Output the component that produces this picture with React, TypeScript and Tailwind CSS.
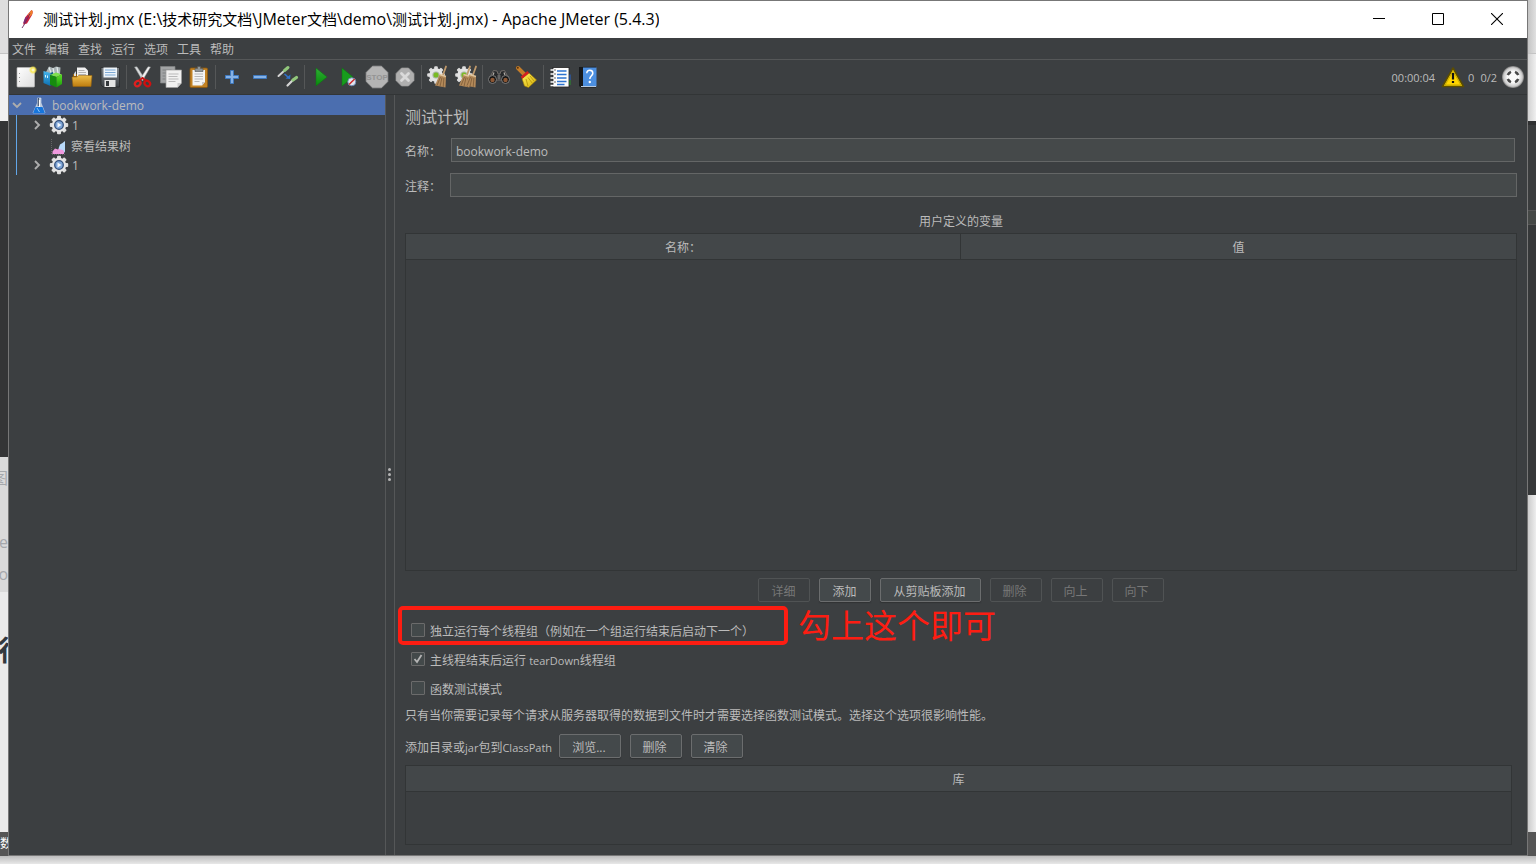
import type { ReactNode } from "react";

const UI_FONT = "font-['Open_Sans','Noto_Sans_CJK_SC',sans-serif]";

function Icon({ children, defs }: { children: ReactNode; defs?: ReactNode }) {
  return (
    <svg viewBox="0 0 24 24" className="size-6" aria-hidden="true">
      {defs && <defs>{defs}</defs>}
      {children}
    </svg>
  );
}

function Gradient({ id, from, to, diagonal }: { id: string; from: string; to: string; diagonal?: boolean }) {
  return (
    <linearGradient id={id} x1="0" y1="0" x2={diagonal ? "1" : "0"} y2="1">
      <stop offset="0" stopColor={from} />
      <stop offset="1" stopColor={to} />
    </linearGradient>
  );
}

const GEAR_TEETH = [0, 45, 90, 135, 180, 225, 270, 315];

function SmallBroom({ x = 0 }: { x?: number }) {
  return (
    <g transform={`translate(${x} 0)`}>
      <path d="M20 1.500 16.800 10.500" stroke="#c09a6c" strokeWidth="1.800" strokeLinecap="round" />
      <path d="M13.500 9.500 20 11.500 19.500 22.500 9 20.500Z" fill="#b48a5a" />
      <path d="M14.500 12 11 20.500M16 12.500 14 21.500M17.900 13 17.200 22" stroke="#7c5a36" strokeWidth="0.800" />
      <path d="M13.500 9.500 20 11.500" stroke="#e0c49c" strokeWidth="1.400" />
    </g>
  );
}

function SilverGear({ cx, cy }: { cx: number; cy: number }) {
  return (
    <g>
      {GEAR_TEETH.map((a) => (
        <rect key={a} x={cx - 1.8} y={cy - 8.8} width="3.600" height="5" rx="1" fill="#dcdcdc" transform={`rotate(${a} ${cx} ${cy})`} />
      ))}
      <circle cx={cx} cy={cy} r="6.800" fill="#e4e4e4" />
      <circle cx={cx} cy={cy} r="3.600" fill="#a9b7a0" />
      <circle cx={cx} cy={cy} r="2.500" fill="#79bb22" />
    </g>
  );
}

const icons: Record<string, ReactNode> = {
  new: (
    <Icon defs={<><Gradient id="pg" from="#ffffff" to="#dddddd" diagonal /><radialGradient id="glow"><stop offset="0" stopColor="#fff" /><stop offset="0.500" stopColor="#f8e858" /><stop offset="1" stopColor="#ffe933" stopOpacity="0" /></radialGradient></>}>
      <rect x="3" y="2.500" width="17.500" height="19.500" rx="0.800" fill="url(#pg)" stroke="#b9b9b9" strokeWidth="0.700" />
      <path d="M5.500 8v1M5.500 12v1M5.500 16v1" stroke="#999" />
      <circle cx="19" cy="5" r="4.200" fill="url(#glow)" />
    </Icon>
  ),
  templates: (
    <Icon defs={<><Gradient id="tb" from="#48b7ee" to="#0c6fb0" /><Gradient id="tg" from="#5ede28" to="#159a08" /></>}>
      <path d="M4 7 7 1.500 11 3 14 1.500 18.500 2.500 18 9 8 10Z" fill="#aab4b6" />
      <path d="m7 2.500 2 5M11 3l1 5M15 2l1 6" stroke="#e6eded" strokeWidth="1.200" />
      <path d="m1.500 6 7 2v13l-7-3Z" fill="url(#tb)" />
      <path d="m8.500 8 2.500-1v12l-2.500 2Z" fill="#0b5d8a" />
      <path d="M3.500 10v2.500M5.500 10.500V13" stroke="#d8f4ff" />
      <path d="m8 10 6-2.500 6 2-5.500 2.500Z" fill="#7fe04e" />
      <path d="m8 10 6.500 2v10.500L8 19.500Z" fill="#168c0e" />
      <path d="m14.500 12 5.500-2.500V19l-5.500 3.500Z" fill="url(#tg)" />
    </Icon>
  ),
  open: (
    <Icon defs={<Gradient id="fo" from="#edbd48" to="#bd7c0f" />}>
      <path d="M3 9h5l1 2h11v9H3Z" fill="#98630b" />
      <path d="M7 2.500h8l3 3v8H7Z" fill="#f1f1f1" />
      <path d="M8.500 5.500h6M8.500 7.500h7.500M8.500 9.500h7.500" stroke="#aaa" strokeWidth="0.900" />
      <path d="M4 8.500 6 6v5H4Z" fill="#ddd" />
      <path d="M2 12h5l1.500-1.500H22l-1 11H3Z" fill="url(#fo)" stroke="#9a670f" strokeWidth="0.600" />
    </Icon>
  ),
  save: (
    <Icon defs={<Gradient id="sv" from="#80858a" to="#3c4044" />}>
      <path d="M3 2.500h18.500v19.500H5L3 20Z" fill="url(#sv)" stroke="#292b2c" strokeWidth="0.800" />
      <rect x="5.500" y="2.500" width="13.500" height="10" fill="#edf4fa" />
      <path d="M7 5h10.500M7 7.500h10.500M7 10h10.500" stroke="#7ca8d4" strokeWidth="1.100" />
      <rect x="6.500" y="15" width="11" height="7" fill="#e4e4e4" />
      <rect x="8" y="16" width="3" height="5" fill="#34383b" />
    </Icon>
  ),
  cut: (
    <Icon>
      <path d="M3.500 2 6 1.800 14 14l-2.500 1.500Z" fill="#d8dbdc" stroke="#8c9091" strokeWidth="0.500" />
      <path d="M19.500 2 17 1.800 9 14l2.500 1.500Z" fill="#f2f2f2" stroke="#8c9091" strokeWidth="0.500" />
      <ellipse cx="6.700" cy="18.500" rx="3" ry="2.500" fill="none" stroke="#e02020" strokeWidth="2.200" transform="rotate(-40 6.700 18.500)" />
      <ellipse cx="16.300" cy="18.500" rx="3" ry="2.500" fill="none" stroke="#d01010" strokeWidth="2.200" transform="rotate(40 16.300 18.500)" />
      <path d="m8 15.500 3.500-2.500 3.500 2.500" fill="none" stroke="#c51010" strokeWidth="2" />
    </Icon>
  ),
  copy: (
    <Icon>
      <path d="M1.500 1.500H16V18H1.500Z" fill="#a2a4a5" stroke="#828485" strokeWidth="0.700" />
      <path d="M3.500 5h9M3.500 8h4M3.500 11h3M3.500 14h3" stroke="#7f8182" />
      <path d="M7 5h15.500v13l-4 4.500H7Z" fill="#f1f1f0" stroke="#9c9c9c" strokeWidth="0.700" />
      <path d="M9.500 9h10M9.500 11.500h9M9.500 14h10M9.500 16.500h7" stroke="#b9b9b9" />
      <path d="M18.500 22.500V18h4Z" fill="#cbcbcb" />
    </Icon>
  ),
  paste: (
    <Icon>
      <rect x="3" y="3" width="17.500" height="19.500" rx="1.200" fill="#c28223" stroke="#8c570c" strokeWidth="0.800" />
      <path d="M5.500 5h12.500v12l-3 3.500H5.500Z" fill="#f4f4f3" />
      <path d="M7.500 9h8.500M7.500 11.500h8.500M7.500 14h8.500M7.500 16.500h5" stroke="#b7b7b7" />
      <path d="M15 20.500V17h3Z" fill="#c9c9c9" />
      <path d="M8 3.500h2.500V1.500h3v2H16V6.500H8Z" fill="#8f9496" stroke="#4f5355" strokeWidth="0.600" />
    </Icon>
  ),
  plus: (
    <Icon><path d="M10.500 5.500h3v5h5v3h-5v5h-3v-5h-5v-3h5Z" fill="#86b2e6" stroke="#3e79bf" strokeWidth="1" /></Icon>
  ),
  minus: (
    <Icon><path d="M5.500 10.500h13v3h-13Z" fill="#86b2e6" stroke="#3e79bf" strokeWidth="1" /></Icon>
  ),
  toggle: (
    <Icon>
      <path d="m2.500 11 6-5.500" stroke="#d5d5d5" strokeWidth="2" strokeLinecap="round" />
      <path d="m8.500 5.500 3.500-3" stroke="#91c77b" strokeWidth="3" strokeLinecap="round" />
      <path d="m11.500 20.500 5.500-5.500" stroke="#d5d5d5" strokeWidth="2.200" strokeLinecap="round" />
      <path d="m17 15 3.500-2.500" stroke="#91c77b" strokeWidth="3.200" strokeLinecap="round" />
      <path d="m8.500 9 4 3.500" stroke="#3172c8" strokeWidth="1.600" />
      <path d="m14.500 9.500-.5 4.500-4.500-.5Z" fill="#3172c8" />
    </Icon>
  ),
  start: (
    <Icon defs={<Gradient id="pl" from="#2fae35" to="#078a0a" />}><path d="m7 3 11 9L7 21Z" fill="url(#pl)" stroke="#0c7412" strokeWidth="0.500" /></Icon>
  ),
  startNoPause: (
    <Icon>
      <path d="m5 3 11 9L5 21Z" fill="#179c1d" stroke="#0c7412" strokeWidth="0.500" />
      <circle cx="14.800" cy="16.800" r="4" fill="#dfe6ee" stroke="#6984b2" strokeWidth="0.900" />
      <path d="m12 19.500 5.600-5.500" stroke="#cf2b2b" strokeWidth="1.500" />
    </Icon>
  ),
  stop: (
    <Icon>
      <path d="M7.500 1.200h9L22.800 7.500v9l-6.300 6.300h-9L1.200 16.500v-9Z" fill="#b4b4b4" stroke="#a3a3a3" strokeWidth="0.800" />
      <text x="12" y="14.800" textAnchor="middle" fontSize="8" fontWeight="700" fill="#939393" fontFamily="Liberation Sans Narrow, Liberation Sans, sans-serif">STOP</text>
    </Icon>
  ),
  shutdown: (
    <Icon>
      <path d="M8.500 3h7L21 8.500v7L15.500 21h-7L3 15.500v-7Z" fill="#afafaf" stroke="#9b9b9b" strokeWidth="0.700" />
      <path d="m8.500 8.500 7 7m0-7-7 7" stroke="#dadada" strokeWidth="2.800" strokeLinecap="round" />
    </Icon>
  ),
  clear: (<Icon><SilverGear cx={10} cy={10} /><SmallBroom /></Icon>),
  clearAll: (<Icon><SilverGear cx={10} cy={10} /><SmallBroom x={-4} /><SmallBroom x={2} /></Icon>),
  search: (
    <Icon>
      <path d="M3 12 6.500 5.500 10 6l1 3h2l1-3 3.500-.5L21 12l-3 3H6Z" fill="#26282a" stroke="#77716c" strokeWidth="0.900" />
      <path d="M7 7.500 6 10M17 7.500l1 2.500" stroke="#b5b0aa" strokeWidth="1.200" />
      <circle cx="5.500" cy="14.500" r="4" fill="#161616" stroke="#7e7e7e" />
      <circle cx="18.500" cy="14.500" r="4" fill="#161616" stroke="#7e7e7e" />
      <circle cx="5.500" cy="15" r="2.200" fill="#8c5735" />
      <circle cx="18.500" cy="15" r="2.200" fill="#8c5735" />
      <rect x="10.500" y="9.500" width="3" height="5" rx="1" fill="#666" />
    </Icon>
  ),
  reset: (
    <Icon defs={<Gradient id="br" from="#fff05a" to="#d4ae08" diagonal />}>
      <path d="m3 3 6.500 6.500" stroke="#c47d2a" strokeWidth="4" strokeLinecap="round" />
      <circle cx="2.800" cy="2.800" r="1" fill="#5c3308" />
      <path d="M7 13.500 14 8l7.500 7-8 7.500-4-1.500Z" fill="url(#br)" stroke="#a98303" strokeWidth="0.600" />
      <path d="m11 14 2 7M13 12.500l4.500 6M15 11l4 5" stroke="#b49007" strokeWidth="0.800" />
      <path d="M6.500 12.800 13.200 7" stroke="#d32020" strokeWidth="2.600" />
    </Icon>
  ),
  log: (
    <Icon>
      <path d="M20 9.500h2.500V15H20Z" fill="#2365ce" />
      <path d="M20 15h2.500v5H20Z" fill="#289131" />
      <rect x="5" y="2.500" width="16" height="19.500" fill="#fdfdfd" stroke="#222" strokeWidth="0.800" />
      <path d="M9 6h9.500M9 9.500h9.500M9 13h9.500M9 16.500h9.500M9 19.500h7.500" stroke="#2d73d0" strokeWidth="1.300" />
      <path d="M2.500 5h4M2.500 9h4M2.500 13h4M2.500 17h4M2.500 20.500h4" stroke="#fff" strokeWidth="1.500" />
      <path d="M6.500 5h1M6.500 9h1M6.500 13h1M6.500 17h1" stroke="#333" strokeWidth="1.500" />
    </Icon>
  ),
  help: (
    <Icon>
      <path d="M3 2 20 1.800V22.500H5L3 21Z" fill="#17191b" />
      <path d="M7 2.500h13.500V21.500H7Z" fill="#4c8fe0" />
      <path d="M5 21.500h15" stroke="#b9cbe0" strokeWidth="1" />
      <path d="M10.800 8.200c0-4.200 6.200-3.600 6 .2-.1 2.300-3 2.500-3 5.600" fill="none" stroke="#fff" strokeWidth="1.500" />
      <circle cx="13.800" cy="17" r="1.200" fill="#fff" />
    </Icon>
  ),
};

const toolGroups: { id: string; label: string }[][] = [
  [{ id: "new", label: "新建" }, { id: "templates", label: "模板" }, { id: "open", label: "打开" }, { id: "save", label: "保存" }],
  [{ id: "cut", label: "剪切" }, { id: "copy", label: "复制" }, { id: "paste", label: "粘贴" }],
  [{ id: "plus", label: "全部展开" }, { id: "minus", label: "全部折叠" }, { id: "toggle", label: "切换" }],
  [{ id: "start", label: "启动" }, { id: "startNoPause", label: "不停顿开始" }, { id: "stop", label: "停止" }, { id: "shutdown", label: "关闭" }],
  [{ id: "clear", label: "清除" }, { id: "clearAll", label: "清除全部" }],
  [{ id: "search", label: "查找" }, { id: "reset", label: "重置搜索" }],
  [{ id: "log", label: "函数助手" }, { id: "help", label: "帮助" }],
];

const menus = ["文件", "编辑", "查找", "运行", "选项", "工具", "帮助"];

function TitleBar() {
  const control = "flex w-[59px] items-center justify-center pb-0.5";
  const han = "text-[15px]";
  return (
    <header className="flex h-9 items-stretch bg-white pr-px text-black">
      <div className="flex min-w-0 flex-1 items-center gap-2 pb-0.5 pl-2.5">
        <svg viewBox="0 0 16 20" className="h-5 w-4 shrink-0" aria-hidden="true">
          <path d="M12.500 1c1.500.5 1.400 2.700.5 5L8 14.500 4 15.500 6.500 8Z" fill="#c9203f" />
          <path d="M12.500 1c1.500.5 1.400 2.700.5 4.500L10.500 8 9 5.500Z" fill="#f0802b" />
          <path d="M7 8.500 5 14" stroke="#7c2a78" strokeWidth="1.600" />
          <path d="m11 4.500-6 11.500-2 3" stroke="#6b2760" strokeWidth="0.900" fill="none" />
        </svg>
        <h1 className="truncate text-base leading-6">
          <span className={han}>测试计划</span>.jmx (E:\<span className={han}>技术研究文档</span>\JMeter<span className={han}>文档</span>\demo\<span className={han}>测试计划</span>.jmx) - Apache JMeter (5.4.3)
        </h1>
      </div>
      <button type="button" aria-label="最小化" className={control}>
        <svg viewBox="0 0 12 12" className="size-3" aria-hidden="true"><path d="M0 5.500h12" stroke="#000" /></svg>
      </button>
      <button type="button" aria-label="最大化" className={control}>
        <svg viewBox="0 0 12 12" className="size-3" aria-hidden="true"><path d="M.5.5h11v11H.5Z" fill="none" stroke="#000" /></svg>
      </button>
      <button type="button" aria-label="关闭窗口" className={control}>
        <svg viewBox="0 0 12 12" className="size-3" aria-hidden="true"><path d="m0 0 12 12M12 0 0 12" stroke="#000" strokeWidth="1.100" /></svg>
      </button>
    </header>
  );
}

function Toolbar() {
  return (
    <div role="toolbar" className="flex h-[35px] items-center border-b border-[#323536] pl-[3px] pr-0.5">
      {toolGroups.map((group, i) => (
        <div key={i} className="flex items-center">
          {i > 0 && <div className="flex w-[5px] justify-center"><div className="h-6 w-px bg-[#555758]" /></div>}
          {group.map((t) => (
            <button key={t.id} type="button" aria-label={t.label} className="flex w-7 items-center justify-center">
              {icons[t.id]}
            </button>
          ))}
        </div>
      ))}
      <div className="ml-auto flex items-center text-[11px]">
        <span className="pt-0.5">00:00:04</span>
        <button type="button" aria-label="日志错误" className="ml-1.5 flex items-center gap-[3px]">
          <svg viewBox="0 0 24 22" className="h-[22px] w-6" aria-hidden="true">
            <path d="M12 2 22.500 20.500h-21Z" fill="#ffd800" stroke="#5c4d00" strokeWidth="1.600" strokeLinejoin="round" />
            <path d="M12 5.200 19.800 19H4.200Z" fill="#ffd500" stroke="#b39900" strokeWidth="0.700" />
            <path d="M12 7v6.500" stroke="#111" strokeWidth="2.200" />
            <path d="M10.900 15h2.200v2h-2.200Z" fill="#111" />
          </svg>
          <span className="pt-0.5">0</span>
        </button>
        <span className="ml-1.5 pt-0.5">0/2</span>
        <svg viewBox="0 0 24 24" className="ml-1 size-6" aria-hidden="true">
          <defs><radialGradient id="rm"><stop offset="0.500" stopColor="#fafafa" /><stop offset="0.850" stopColor="#c9c9c9" /><stop offset="1" stopColor="#777" /></radialGradient></defs>
          <circle cx="12" cy="12" r="11" fill="url(#rm)" />
          {[45, 135, 225, 315].map((a) => (
            <path key={a} d="M9.300 5.700Q12 4.500 14.700 5.700L13.900 7.900h-3.800Z" fill="#484848" transform={`rotate(${a} 12 12)`} />
          ))}
        </svg>
      </div>
    </div>
  );
}

function Chevron({ open }: { open?: boolean }) {
  return (
    <svg viewBox="0 0 10 10" className="size-2.5 shrink-0" aria-hidden="true">
      <path d={open ? "m1 3 4 4 4-4" : "m3 1 4 4-4 4"} fill="none" stroke="#adadad" strokeWidth="1.900" />
    </svg>
  );
}

function ThreadGroupIcon() {
  return (
    <svg viewBox="0 0 20 20" className="size-5 shrink-0" aria-hidden="true">
      {GEAR_TEETH.map((a) => (
        <rect key={a} x="8" y="0.800" width="4" height="5" rx="1" fill="#dedede" transform={`rotate(${a} 10 10)`} />
      ))}
      <circle cx="10" cy="10" r="7.200" fill="#e6e6e6" />
      <circle cx="10" cy="10" r="4.300" fill="#7fa6d8" stroke="#33507c" strokeWidth="1.300" />
      <path d="m8.500 7.500 4 2.500-4 2.500Z" fill="#f2f7fd" />
    </svg>
  );
}

function ThreadGroup() {
  return (
    <li role="treeitem" className="flex h-5 items-center gap-[7px] pl-[15px]">
      <Chevron />
      <ThreadGroupIcon />
      <span className="-ml-1 pt-0.5">1</span>
    </li>
  );
}

function Tree() {
  return (
    <nav aria-label="测试计划树" className="w-[377px] shrink-0 border-r border-[#555758]">
      <ul role="tree">
        <li role="treeitem" aria-expanded="true" aria-selected="true">
          <div className="flex h-5 items-center bg-[#4b6eaf] pl-[3px]">
            <Chevron open />
            <svg viewBox="0 0 14 18" className="ml-2.5 h-[18px] w-3.5 shrink-0" aria-hidden="true">
              <path d="M5.500 2h3.500v5L13 17H1L5.500 7Z" fill="#b7c6da" stroke="#dbe6f2" strokeWidth="0.600" />
              <path d="M6.300 2v8" stroke="#31435f" strokeWidth="1.100" />
              <path d="M3.500 11h7L13 17.300H1Z" fill="#1675dc" />
              <path d="M7.500 4v7" stroke="#fff" strokeWidth="1.200" />
              <path d="m5 12 2.500 4" stroke="#8dc5fa" />
            </svg>
            <span className="ml-1.5 pt-0.5">bookwork-demo</span>
          </div>
          <ul role="group" className="ml-[7px] border-l border-[#62a7ea]">
            <ThreadGroup />
            <li role="treeitem" className="flex h-5 items-center pl-[33px]">
              <svg viewBox="0 0 16 16" className="mt-1 size-4 shrink-0" aria-hidden="true">
                <path d="M1.500 0v15.500H16" fill="none" stroke="#777" strokeWidth="0.700" strokeDasharray="1 1" />
                <path d="M2.500 15v-2.500L5 9.500l3 1 2.500-3L12 10l2-1v6Z" fill="#ef9ade" />
                <path d="m8.500 9.500 1.500-4 2.500-1.500L15 2v12l-2-3-2.500-.5Z" fill="#b9dafa" />
              </svg>
              <span className="ml-[5px] pt-1">察看结果树</span>
            </li>
            <ThreadGroup />
          </ul>
        </li>
      </ul>
    </nav>
  );
}

function PushButton({ children, disabled }: { children: ReactNode; disabled?: boolean }) {
  return (
    <button
      type="button"
      disabled={disabled}
      className="h-6 rounded-xs border border-[#6b6d6e] bg-[#44494b] pl-3 pr-3.5 pt-[3px] leading-4 shadow-[0_1px_1px_#303234] disabled:border-[#505354] disabled:bg-transparent disabled:text-[#777] disabled:shadow-none"
    >
      {children}
    </button>
  );
}

function CheckRow({ id, label, checked }: { id: string; label: ReactNode; checked?: boolean }) {
  return (
    <div className="flex h-[29px] items-center gap-[5px] pb-px pl-1.5">
      <span className="grid size-3.5 place-items-center">
        <input
          id={id}
          type="checkbox"
          defaultChecked={checked}
          className="peer col-start-1 row-start-1 size-3.5 appearance-none rounded-[1px] border border-[#6b6b6b] bg-[#43494a]"
        />
        <svg viewBox="0 0 14 14" className="pointer-events-none col-start-1 row-start-1 hidden size-3.5 peer-checked:block" aria-hidden="true">
          <path d="m3.500 7 2.500 3 4.500-7" fill="none" stroke="#b5b5b5" strokeWidth="1.800" />
        </svg>
      </span>
      <label htmlFor={id} className="pt-[3px]">{label}</label>
    </div>
  );
}

function TestPlanPanel() {
  const field = "h-6 min-w-0 flex-1 border border-[#646666] bg-[#45494a] px-1 pt-0.5 text-[#bbbbbb] outline-none";
  const head = "h-[26px] border-b border-[#323536] bg-[#434749] px-0 pb-0 pt-[3px] font-normal";
  return (
    <main className="flex min-w-0 flex-1 flex-col border-l border-[#555758] px-2.5 pb-2.5 pt-3">
      <h2 className="text-base leading-5">测试计划</h2>
      <div className="mt-[11px] flex items-center pr-0.5">
        <label htmlFor="plan-name" className="w-[46px] pt-[3px]">名称：</label>
        <input id="plan-name" type="text" defaultValue="bookwork-demo" className={field} />
      </div>
      <div className="mt-[11px] flex items-center">
        <label htmlFor="plan-comment" className="w-[45px] pt-[3px]">注释：</label>
        <input id="plan-comment" type="text" className={field} />
      </div>
      <h3 className="mb-[3px] mt-[17px] text-center">用户定义的变量</h3>
      <div className="flex-1 border border-[#323536]">
        <table className="w-full table-fixed border-separate border-spacing-0">
          <thead>
            <tr>
              <th scope="col" className={`${head} border-r`}>名称：</th>
              <th scope="col" className={head}>值</th>
            </tr>
          </thead>
          <tbody />
        </table>
      </div>
      <div className="mt-[7px] flex justify-center gap-[9px]">
        <PushButton disabled>详细</PushButton>
        <PushButton>添加</PushButton>
        <PushButton>从剪贴板添加</PushButton>
        <PushButton disabled>删除</PushButton>
        <PushButton disabled>向上</PushButton>
        <PushButton disabled>向下</PushButton>
      </div>
      <div className="relative mt-3.5">
        <CheckRow id="serialize" label="独立运行每个线程组（例如在一个组运行结束后启动下一个）" />
        <div className="pointer-events-none absolute -left-[7px] -top-2.5 flex items-center gap-2.5">
          <div className="h-[39px] w-[390px] rounded-[5px] border-4 border-[#fd1d12]" />
          <span className="text-[33px] leading-9 text-[#fd1d12]">勾上这个即可</span>
        </div>
      </div>
      <CheckRow id="teardown" label={<>主线程结束后运行 <span className="text-[11px]">tearDown</span>线程组</>} checked />
      <CheckRow id="functional" label="函数测试模式" />
      <p className="mb-2.5 mt-[5px]">只有当你需要记录每个请求从服务器取得的数据到文件时才需要选择函数测试模式。选择这个选项很影响性能。</p>
      <div className="flex items-center gap-[9px]">
        <span className="-mr-0.5 pt-[3px]">添加目录或<span className="text-[11px]">jar</span>包到<span className="text-[11px]">ClassPath</span></span>
        <PushButton>浏览...</PushButton>
        <PushButton>删除</PushButton>
        <PushButton>清除</PushButton>
      </div>
      <div className="mr-[5px] mt-[7px] h-20 border border-[#323536]">
        <table className="w-full border-separate border-spacing-0">
          <thead><tr><th scope="col" className={head}>库</th></tr></thead>
          <tbody />
        </table>
      </div>
    </main>
  );
}

function LeftBackdrop() {
  return (
    <div aria-hidden="true" className="flex w-[9px] shrink-0 flex-col overflow-hidden whitespace-nowrap border-r border-[#777]">
      <div className="h-[53px] bg-[#dedede]" />
      <div className="h-[68px] border-t border-[#c4c4c4] bg-[#f1f1f1]" />
      <div className="h-[336px] bg-[#343536]" />
      <div className="flex h-[135px] flex-col items-end bg-[#dadada] pt-[11px] text-[#a5a8ac]">
        <span className="text-base leading-5">图</span>
        <span className="mt-11 text-base leading-5">ge</span>
        <span className="mt-3 text-base leading-5">o</span>
      </div>
      <div className="flex flex-1 flex-col items-start bg-[#ebebeb] pt-[42px] text-[28px] font-bold leading-8 text-[#34393f]">
        <span className="-ml-0.5">行</span>
      </div>
      <div className="flex h-6 items-center bg-[#555] text-xs text-white">数</div>
    </div>
  );
}

function RightBackdrop() {
  return (
    <div aria-hidden="true" className="flex w-[9px] shrink-0 flex-col border-l border-[#777]">
      <div className="h-[53px] bg-gradient-to-r from-[#c4c4c4] to-[#e0e0e0]" />
      <div className="h-[68px] border-t border-[#c4c4c4] bg-gradient-to-r from-[#d2d2d2] to-[#f0f0f0]" />
      <div className="h-1 bg-[#303132]" />
      <div className="h-[86px] border-b border-[#555] bg-[#3a3c3d]" />
      <div className="h-3.5 border-b border-[#555] bg-[#454846]" />
      <div className="h-[270px] bg-[#363839]" />
      <div className="flex-1 bg-gradient-to-r from-[#cccccc] to-[#eeeeee]" />
      <div className="h-6 bg-[#555]" />
    </div>
  );
}

export default function App() {
  return (
    <div className={`flex min-h-screen flex-col bg-[#e8e8e8] text-xs leading-4 text-[#bbbbbb] ${UI_FONT}`}>
      <div className="flex flex-1">
        <LeftBackdrop />
        <div className="flex min-w-0 flex-1 flex-col border-b border-t border-[#777] bg-[#3c3f41]">
          <div className="h-px bg-white" />
          <TitleBar />
          <nav aria-label="主菜单" className="flex h-[22px] items-center gap-[9px] border-b border-[#555758] pl-[3px] pt-0.5">
            {menus.map((m) => <button key={m} type="button">{m}</button>)}
          </nav>
          <Toolbar />
          <div className="flex flex-1">
            <Tree />
            <div role="separator" aria-orientation="vertical" className="flex w-2 shrink-0 flex-col items-center justify-center gap-0.5 pb-0.5 pr-px">
              <span className="size-[3px] rounded-full bg-[#b5b5b5]" />
              <span className="size-[3px] rounded-full bg-[#b5b5b5]" />
              <span className="size-[3px] rounded-full bg-[#b5b5b5]" />
            </div>
            <TestPlanPanel />
          </div>
        </div>
        <RightBackdrop />
      </div>
      <div aria-hidden="true" className="h-2 bg-gradient-to-b from-[#bdbdbd] to-[#e8e8e8]" />
    </div>
  );
}
